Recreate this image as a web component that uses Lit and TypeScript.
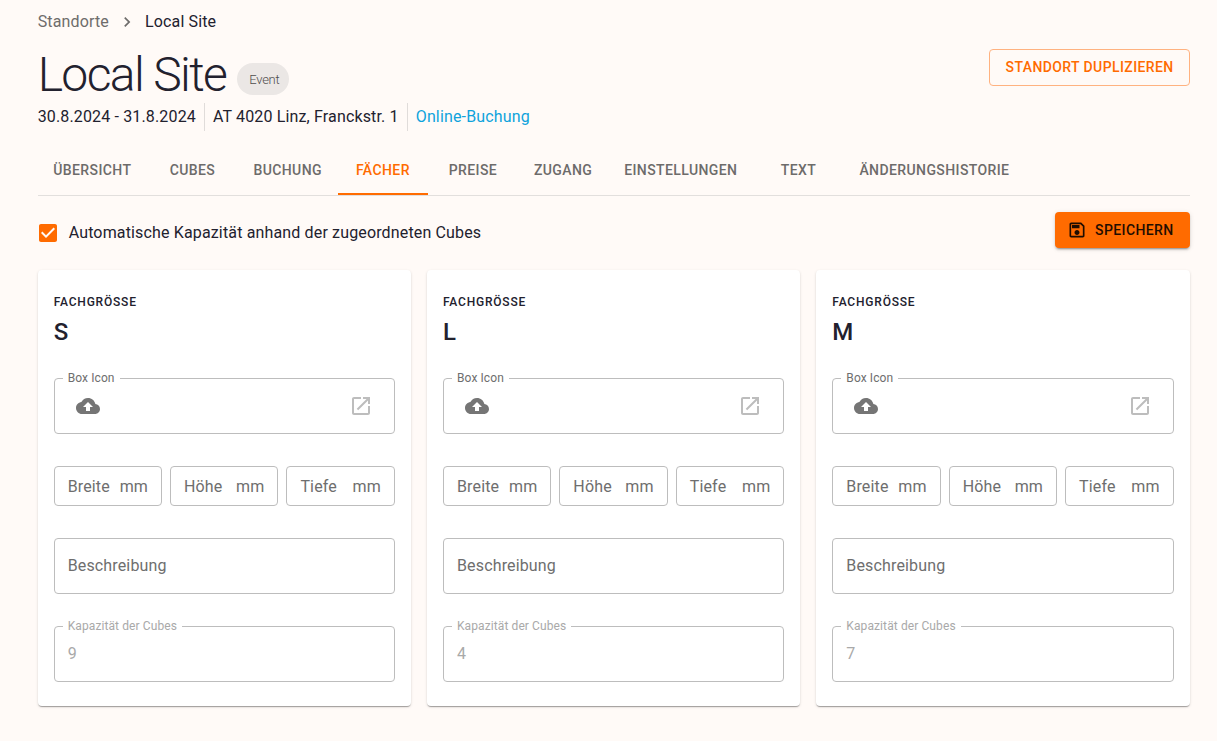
import { LitElement, html, css, svg } from 'lit';
import { customElement } from 'lit/decorators.js';

const icons = {
  next: svg`<path d="M10 6 8.59 7.41 13.17 12l-4.58 4.59L10 18l6-6z" />`,
  check: svg`<path d="M19 3H5c-1.11 0-2 .9-2 2v14c0 1.1.89 2 2 2h14c1.11 0 2-.9 2-2V5c0-1.1-.89-2-2-2zm-9 14l-5-5 1.41-1.41L10 14.17l7.59-7.59L19 8l-9 9z" />`,
  save: svg`<path d="M17 3H5c-1.11 0-2 .9-2 2v14c0 1.1.89 2 2 2h14c1.1 0 2-.9 2-2V7l-4-4zm2 16H5V5h11.17L19 7.83V19zm-7-7c-1.66 0-3 1.34-3 3s1.34 3 3 3 3-1.34 3-3-1.34-3-3-3zM6 6h9v4H6z" />`,
  upload: svg`<path d="M19.35 10.04C18.67 6.59 15.64 4 12 4 9.11 4 6.6 5.64 5.35 8.04 2.34 8.36 0 10.91 0 14c0 3.31 2.69 6 6 6h13c2.76 0 5-2.24 5-5 0-2.64-2.05-4.78-4.65-4.96zM14 13v4h-4v-4H7l5-5 5 5h-3z" />`,
  open: svg`<path d="M19 19H5V5h7V3H5c-1.11 0-2 .9-2 2v14c0 1.1.89 2 2 2h14c1.1 0 2-.9 2-2v-7h-2v7zM14 3v2h3.59l-9.83 9.83 1.41 1.41L19 6.41V10h2V3h-7z" />`,
};

const icon = (name: keyof typeof icons, cls = '') =>
  html`<svg class="icon ${cls}" viewBox="0 0 24 24" fill="currentColor">${icons[name]}</svg>`;

const TABS = ['Übersicht', 'Cubes', 'Buchung', 'Fächer', 'Preise', 'Zugang', 'Einstellungen', 'Text', 'Änderungshistorie'];

const COMPARTMENTS = [
  { size: 'S', capacity: 9 },
  { size: 'L', capacity: 4 },
  { size: 'M', capacity: 7 },
];

@customElement('app-root')
export class AppRoot extends LitElement {
  static styles = css`
    :host {
      display: block;
      min-height: 741px;
      box-sizing: border-box;
      padding: 0 27.33px 0 37.67px;
      background: #fffaf7;
      color: #22212e;
      font-family: Roboto, 'Liberation Sans', sans-serif;
      font-size: 16px;
      letter-spacing: 0.15px;
    }

    .icon {
      display: block;
      width: 24px;
      height: 24px;
      flex-shrink: 0;
    }

    .breadcrumbs {
      display: flex;
      align-items: center;
      box-sizing: border-box;
      height: 42px;
      padding-top: 1px;
      line-height: 24px;
    }

    .breadcrumbs .muted {
      color: #6e6c6b;
    }

    .breadcrumbs .icon {
      width: 20px;
      height: 20px;
      margin: 0 8px;
      color: #6e6c6b;
    }

    .head {
      display: flex;
      justify-content: space-between;
      align-items: flex-start;
    }

    .title-row {
      display: flex;
      align-items: center;
      gap: 11px;
      height: 61px;
    }

    h1 {
      margin: 4px 0 0;
      font-size: 48px;
      font-weight: 300;
      line-height: 61px;
      letter-spacing: -1.6px;
    }

    .chip {
      display: flex;
      align-items: center;
      height: 32px;
      margin-top: 13px;
      padding: 0 10px 0 12px;
      border-radius: 16px;
      background: #ebe7e5;
      color: #4f4d4c;
      font-size: 13px;
      font-weight: 300;
      letter-spacing: -0.3px;
    }

    .meta {
      display: flex;
      height: 28px;
      line-height: 28px;
    }

    .meta span {
      padding-right: 8px;
      margin-right: 8px;
      border-right: 1px solid #e0dcda;
    }

    .meta a {
      color: #0fa3dc;
      text-decoration: none;
    }

    .outlined {
      margin-top: 7px;
      height: 37px;
      box-sizing: border-box;
      padding: 0 15px 0 16px;
      border: 1px solid #ffb280;
      border-radius: 4px;
      background: none;
      color: #ff6b00;
      font: 500 14px/35px Roboto, sans-serif;
      letter-spacing: 0.4px;
    }

    .tabs {
      display: flex;
      margin-top: 17px;
      height: 47px;
      border-bottom: 1px solid #e2dfdd;
    }

    .tab {
      box-sizing: border-box;
      min-width: 90px;
      padding: 0 16.4px 0 15.6px;
      height: 47px;
      color: #6d6b6a;
      font-size: 14px;
      font-weight: 500;
      line-height: 44px;
      letter-spacing: 0.4px;
      text-align: center;
      text-transform: uppercase;
    }

    .tab.active {
      color: #ff6b00;
      border-bottom: 2px solid #ff6b00;
    }

    .toolbar {
      display: flex;
      justify-content: space-between;
      align-items: flex-start;
      margin-top: 16px;
      height: 58px;
    }

    .auto {
      display: flex;
      align-items: center;
      height: 42px;
      line-height: 24px;
      margin-left: -2px;
    }

    .auto .icon {
      color: #ff6b00;
      margin-right: 9px;
    }

    .contained {
      display: flex;
      align-items: center;
      gap: 8px;
      height: 36px;
      box-sizing: border-box;
      padding: 0 16px 0 12px;
      border: none;
      border-radius: 4px;
      background: #ff6b00;
      color: #1f0d00;
      font: 500 14px Roboto, sans-serif;
      letter-spacing: 0.4px;
      box-shadow: 0 3px 1px -2px rgba(0, 0, 0, 0.2), 0 2px 2px 0 rgba(0, 0, 0, 0.14), 0 1px 5px 0 rgba(0, 0, 0, 0.12);
    }

    .contained .icon {
      width: 20px;
      height: 20px;
    }

    .cards {
      display: grid;
      grid-template-columns: repeat(3, 1fr);
      gap: 16px;
    }

    .card {
      box-sizing: border-box;
      height: 436px;
      padding: 24px 16px;
      border-radius: 4px;
      background: #fff;
      box-shadow: 0 2px 1px -1px rgba(0, 0, 0, 0.2), 0 1px 1px 0 rgba(0, 0, 0, 0.14), 0 1px 3px 0 rgba(0, 0, 0, 0.12);
    }

    .overline {
      font-size: 12px;
      font-weight: 500;
      line-height: 16px;
      letter-spacing: 0.8px;
      text-transform: uppercase;
    }

    .size {
      margin-top: 7px;
      font-size: 24px;
      font-weight: 500;
      line-height: 30px;
    }

    .fields {
      display: flex;
      flex-direction: column;
      gap: 32px;
      margin-top: 31px;
    }

    .field {
      position: relative;
      display: flex;
      align-items: center;
      height: 56px;
      box-sizing: border-box;
      padding: 0 13px;
      border: 1px solid #bdbdbd;
      border-radius: 4px;
      color: #6e6e6e;
      line-height: 24px;
    }

    .legend {
      position: absolute;
      top: -8px;
      left: 8px;
      padding: 0 5px;
      background: #fff;
      color: #6e6e6e;
      font-size: 12px;
      line-height: 15px;
      letter-spacing: 0.1px;
    }

    .upload {
      justify-content: space-between;
      padding: 0 21px;
    }

    .upload .up {
      color: #757575;
    }

    .upload .ext {
      color: #bdbdbd;
    }

    .dims {
      display: grid;
      grid-template-columns: 1fr 1fr 108.6px;
      gap: 8px;
    }

    .dims .field {
      height: 40px;
      padding-top: 1px;
      justify-content: space-between;
    }

    .disabled .legend,
    .disabled {
      color: #a9a9a9;
    }
  `;

  private renderCard(c: { size: string; capacity: number }) {
    return html`
      <div class="card">
        <div class="overline">Fachgrösse</div>
        <div class="size">${c.size}</div>
        <div class="fields">
          <div class="field upload">
            <span class="legend">Box Icon</span>
            ${icon('upload', 'up')} ${icon('open', 'ext')}
          </div>
          <div class="dims">
            ${['Breite', 'Höhe', 'Tiefe'].map(
              (d) => html`<div class="field"><span>${d}</span><span>mm</span></div>`
            )}
          </div>
          <div class="field">Beschreibung</div>
          <div class="field disabled">
            <span class="legend">Kapazität der Cubes</span>
            ${c.capacity}
          </div>
        </div>
      </div>
    `;
  }

  render() {
    return html`
      <nav class="breadcrumbs">
        <span class="muted">Standorte</span>
        ${icon('next')}
        <span>Local Site</span>
      </nav>
      <div class="head">
        <div>
          <div class="title-row">
            <h1>Local Site</h1>
            <span class="chip">Event</span>
          </div>
          <div class="meta">
            <span>30.8.2024 - 31.8.2024</span>
            <span>AT 4020 Linz, Franckstr. 1</span>
            <a href="#">Online-Buchung</a>
          </div>
        </div>
        <button class="outlined">STANDORT DUPLIZIEREN</button>
      </div>
      <div class="tabs">
        ${TABS.map((t) => html`<div class="tab ${t === 'Fächer' ? 'active' : ''}">${t}</div>`)}
      </div>
      <div class="toolbar">
        <label class="auto">${icon('check')} Automatische Kapazität anhand der zugeordneten Cubes</label>
        <button class="contained">${icon('save')} SPEICHERN</button>
      </div>
      <div class="cards">${COMPARTMENTS.map((c) => this.renderCard(c))}</div>
    `;
  }
}
